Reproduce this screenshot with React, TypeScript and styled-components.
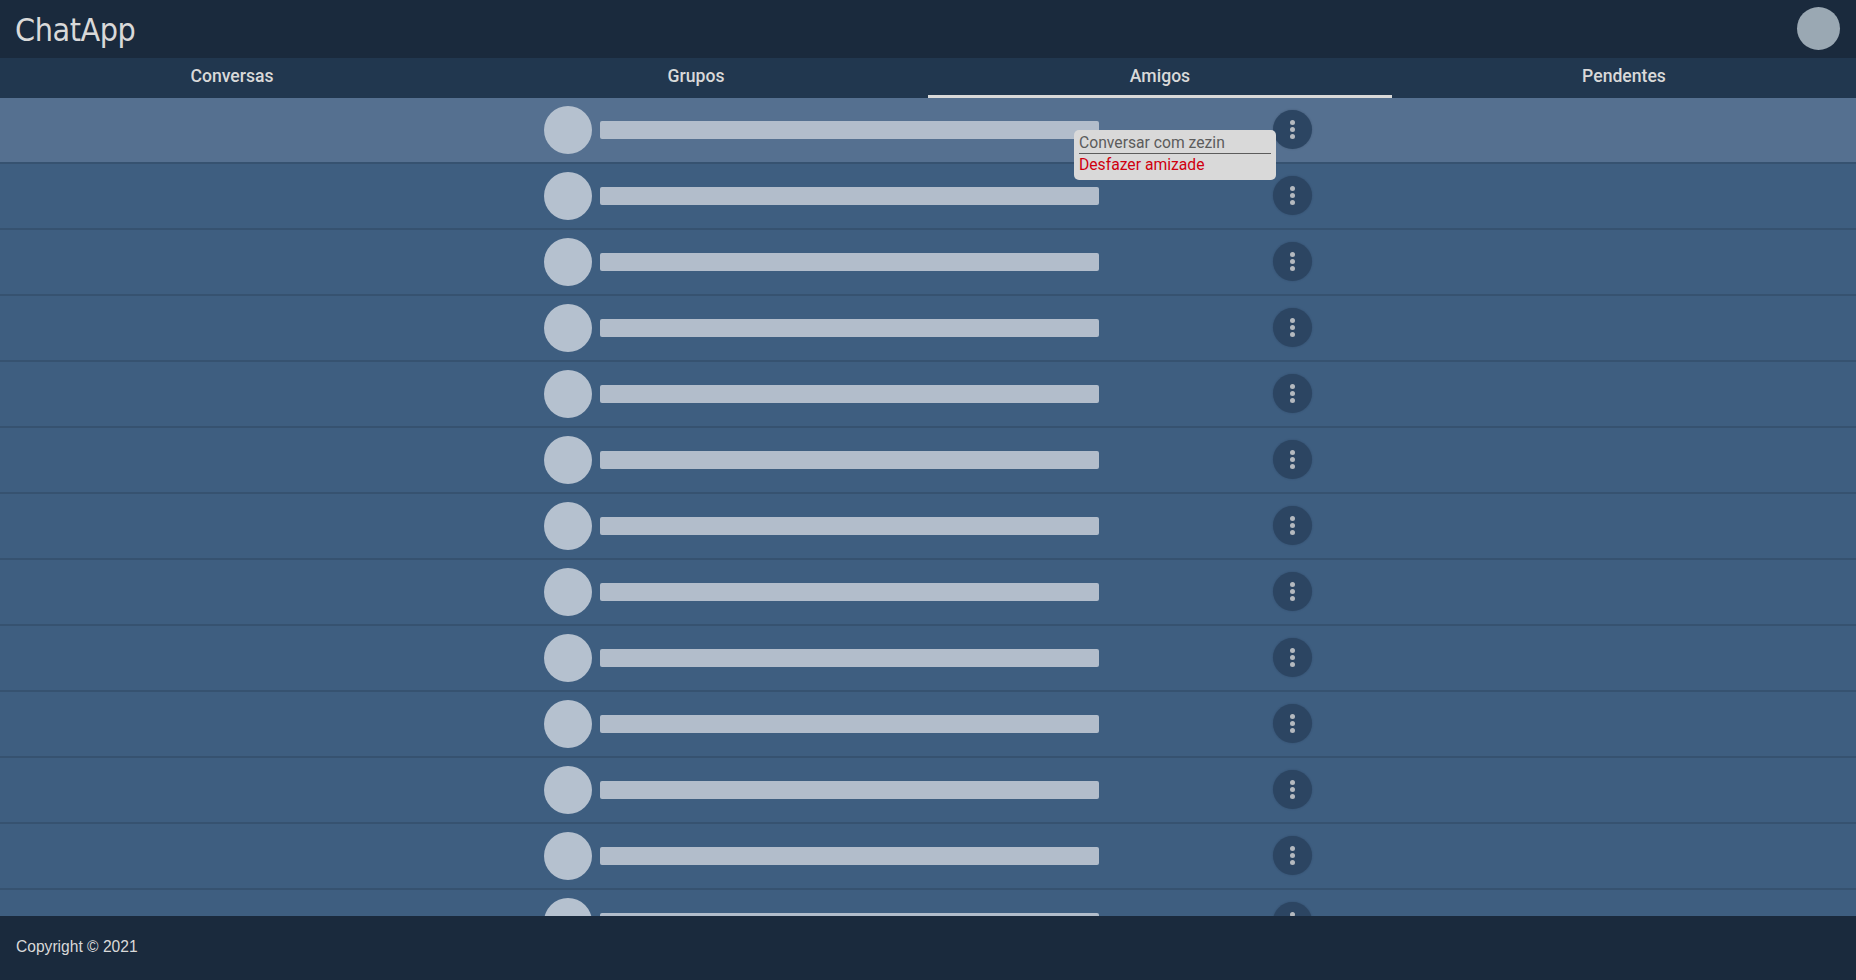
import React from "react";
import styled, { createGlobalStyle } from "styled-components";

const Global = createGlobalStyle`
  html, body { margin: 0; padding: 0; height: 100%; }
  #root { height: 100%; }
  * { box-sizing: border-box; }
`;

const Page = styled.div`
  display: flex;
  flex-direction: column;
  height: 980px;
  overflow: hidden;
  background: #3e5e80;
  font-family: Roboto, sans-serif;
`;

const Header = styled.header`
  flex: 0 0 58px;
  display: flex;
  align-items: center;
  justify-content: space-between;
  padding: 0 16px 0 15px;
  background: #1a2a3d;
`;

const Brand = styled.h1`
  margin: 0;
  font-family: "DejaVu Sans Condensed", "DejaVu Sans", sans-serif;
  font-stretch: condensed;
  font-size: 32px;
  font-weight: 400;
  letter-spacing: -0.45px;
  line-height: 60px;
  height: 58px;
  color: #d9d9d9;
`;

const Profile = styled.div`
  width: 43px;
  height: 43px;
  margin-bottom: 1px;
  border-radius: 50%;
  background: #9aa8b3;
`;

const Tabs = styled.nav`
  flex: 0 0 40px;
  display: grid;
  grid-template-columns: repeat(4, 1fr);
  background: #21374f;
`;

const Tab = styled.div<{ $active?: boolean }>`
  display: flex;
  justify-content: center;
  padding-top: 7px;
  font-size: 17.6px;
  font-weight: 500;
  line-height: 22px;
  color: #d9d9d9;
  border-bottom: 3px solid ${(p) => (p.$active ? "#d9d9d9" : "transparent")};
`;

const List = styled.main`
  flex: 1;
  min-height: 0;
  overflow: hidden;
`;

const Row = styled.div<{ $hover?: boolean }>`
  position: relative;
  height: 66px;
  display: flex;
  align-items: center;
  padding-left: 544px;
  background: ${(p) => (p.$hover ? "#557090" : "#3e5e80")};
  border-bottom: 2px solid #365270;
`;

const Avatar = styled.div`
  flex: none;
  width: 48px;
  height: 48px;
  border-radius: 50%;
  background: #b5c1cf;
`;

const Name = styled.div`
  flex: none;
  width: 499px;
  height: 18px;
  margin-left: 8px;
  border-radius: 2px;
  background: #b2bdcb;
`;

const MenuButton = styled.button`
  flex: none;
  width: 39px;
  height: 39px;
  margin: 0 0 1px 174px;
  padding: 0;
  border: 0;
  border-radius: 50%;
  background: #2c4562;
  box-shadow: 0 0 2px rgba(26, 42, 63, 0.35);
  display: flex;
  flex-direction: column;
  align-items: center;
  justify-content: center;
  gap: 2px;
`;

const Dot = styled.span`
  width: 5px;
  height: 5px;
  border-radius: 50%;
  background: #b4b9bf;
`;

const Menu = styled.div`
  position: absolute;
  z-index: 2;
  left: 1074px;
  top: 32px;
  width: 202px;
  height: 50px;
  padding: 3px 5px;
  border-radius: 5px;
  background: #d9d9d9;
  font-size: 15.7px;
  line-height: 20px;
`;

const MenuItem = styled.div`
  height: 21px;
  color: #5c5c5c;
  border-bottom: 1px solid #5c5c5c;
`;

const DangerItem = styled.div`
  margin-top: 1px;
  color: #d0000f;
`;

const Footer = styled.footer`
  flex: 0 0 64px;
  display: flex;
  align-items: center;
  padding: 0 16px 2px;
  background: #1a2a3d;
  font-family: "Liberation Sans", Arial, sans-serif;
  font-size: 15.6px;
  color: #d9d9d9;
`;

const tabs = ["Conversas", "Grupos", "Amigos", "Pendentes"];
const rows = Array.from({ length: 14 }, (_, i) => i);

export default function App() {
  return (
    <Page>
      <Global />
      <Header>
        <Brand>ChatApp</Brand>
        <Profile />
      </Header>
      <Tabs>
        {tabs.map((t) => (
          <Tab key={t} $active={t === "Amigos"}>
            {t}
          </Tab>
        ))}
      </Tabs>
      <List>
        {rows.map((i) => (
          <Row key={i} $hover={i === 0}>
            <Avatar />
            <Name />
            <MenuButton>
              <Dot />
              <Dot />
              <Dot />
            </MenuButton>
            {i === 0 && (
              <Menu>
                <MenuItem>Conversar com zezin</MenuItem>
                <DangerItem>Desfazer amizade</DangerItem>
              </Menu>
            )}
          </Row>
        ))}
      </List>
      <Footer>Copyright © 2021</Footer>
    </Page>
  );
}
